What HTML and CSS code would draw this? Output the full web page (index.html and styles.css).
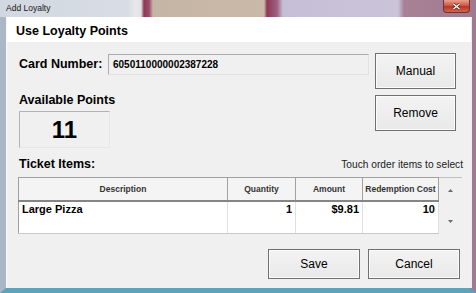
FILE: index.html
```html
<!DOCTYPE html>
<html lang="en">
<head>
  <meta charset="UTF-8">
  <title>Add Loyalty</title>
  <link rel="stylesheet" href="styles.css">
</head>
<body>
  <div class="window">
    <div class="titlebar">
      <span class="title">Add Loyalty</span>
      <span class="close">
        <svg width="9" height="7" viewBox="0 0 9 7">
          <path d="M1.5 1 L7.5 6 M7.5 1 L1.5 6" stroke="#5a1a10" stroke-width="2.6" />
          <path d="M1.5 1 L7.5 6 M7.5 1 L1.5 6" stroke="#fff" stroke-width="1.4" />
        </svg>
      </span>
    </div>
    <div class="frame">
      <div class="client">
        <div class="header">Use Loyalty Points</div>

        <div class="top">
          <div class="top-left">
            <div class="card-row">
              <span class="label card-label">Card Number:</span>
              <div class="card-field">6050110000002387228</div>
            </div>
            <div class="label avail">Available Points</div>
            <div class="points">11</div>
          </div>
          <div class="buttons">
            <button class="btn">Manual</button>
            <button class="btn">Remove</button>
          </div>
        </div>

        <div class="items-head">
          <span class="label">Ticket Items:</span>
          <span class="hint">Touch order items to select</span>
        </div>

        <div class="grid">
          <table class="items">
            <colgroup>
              <col style="width:209px">
              <col style="width:68px">
              <col style="width:67px">
              <col style="width:76px">
            </colgroup>
            <thead>
              <tr>
                <th>Description</th>
                <th>Quantity</th>
                <th>Amount</th>
                <th>Redemption Cost</th>
              </tr>
            </thead>
            <tbody>
              <tr>
                <td>Large Pizza</td>
                <td class="num">1</td>
                <td class="num">$9.81</td>
                <td class="num">10</td>
              </tr>
            </tbody>
          </table>
          <div class="scroll">
            <svg width="5" height="3" viewBox="0 0 5 3"><path d="M0 3 L2.5 0 L5 3 Z" fill="#6a6a6a" /></svg>
            <svg width="5" height="3" viewBox="0 0 5 3"><path d="M0 0 L2.5 3 L5 0 Z" fill="#6a6a6a" /></svg>
          </div>
        </div>

        <div class="actions">
          <button class="btn btn-wide">Save</button>
          <button class="btn btn-wide">Cancel</button>
        </div>
      </div>
    </div>
  </div>
</body>
</html>
```

FILE: styles.css
```css
html, body {
  margin: 0;
  padding: 0;
}
body {
  width: 476px;
  height: 293px;
  overflow: hidden;
  font-family: "Liberation Sans", Arial, sans-serif;
  color: #000;
}
.window {
  display: flex;
  flex-direction: column;
  height: 293px;
}
.titlebar {
  display: flex;
  height: 17px;
  flex: none;
  background: linear-gradient(to right,
    #d2d8e1 0, #d8dde4 128px, #e9e9ec 136px, #e2e0e4 141px,
    #8e3a56 144px, #9a4a66 149px, #c5b5a5 153px, #cab9a8 264px,
    #8e3658 267px, #9d6280 277px, #c6bed6 283px, #cbc4d9 398px,
    #a98196 404px, #a27a8f 476px);
}
.title {
  flex: 1;
  font-size: 8.5px;
  line-height: 17px;
  padding-left: 6px;
  color: #151515;
}
.close {
  width: 25px;
  height: 12px;
  margin-right: 6px;
  border: 1px solid #6a3434;
  border-top: none;
  border-radius: 0 0 4px 4px;
  background: linear-gradient(#e6a08e, #cf5a43 45%, #b93621 55%, #d2664e);
  display: flex;
  align-items: center;
  justify-content: center;
}
.frame {
  flex: 1;
  display: flex;
  border-left: 6px solid #a9b7c6;
  border-right: 6px solid #9e7b91;
  border-bottom: 5px solid #5fa3ba;
}
.client {
  flex: 1;
  display: flex;
  flex-direction: column;
  background: #f0f0f0;
  border-left: 1px solid #fafafa;
  border-right: 1px solid #e8eef4;
}
.header {
  height: 25px;
  box-sizing: border-box;
  background: #fff;
  padding: 7px 0 0 9px;
  font-size: 12.5px;
  font-weight: bold;
  line-height: 15px;
}
.label {
  font-size: 12.5px;
  font-weight: bold;
  line-height: 15px;
}
.top {
  display: flex;
  margin: 11px 15px 0 12px;
}
.top-left {
  flex: 1;
}
.card-row {
  display: flex;
  align-items: center;
  height: 21px;
  margin-top: 1px;
}
.card-label {
  width: 89px;
  flex: none;
}
.card-field {
  flex: 1;
  height: 21px;
  box-sizing: border-box;
  border: 1px solid;
  border-color: #adadad #e2e2e2 #e2e2e2 #adadad;
  padding-left: 4px;
  font-size: 10px;
  font-weight: bold;
  line-height: 19px;
}
.avail {
  margin-top: 18px;
}
.points {
  width: 91px;
  height: 37px;
  margin-top: 3px;
  box-sizing: border-box;
  border: 1px solid;
  border-color: #b4b4b4 #e6e6e6 #e6e6e6 #b4b4b4;
  text-align: center;
  font-size: 24px;
  font-weight: bold;
  line-height: 35px;
}
.buttons {
  width: 81px;
  margin-left: 6px;
  display: flex;
  flex-direction: column;
  gap: 6px;
}
.btn {
  height: 36px;
  box-sizing: border-box;
  border: 1px solid #707070;
  background: linear-gradient(#f3f3f3, #e9e9e9);
  box-shadow: inset 0 0 0 1px #fbfbfb;
  font-family: "Liberation Sans", Arial, sans-serif;
  font-size: 12px;
  color: #000;
  padding: 0;
}
.items-head {
  display: flex;
  justify-content: space-between;
  align-items: baseline;
  margin: 9px 8px 0 12px;
  height: 15px;
}
.hint {
  font-size: 10.2px;
  color: #1a1a1a;
}
.grid {
  display: flex;
  margin: 5px 9px 0 11px;
}
.items {
  width: 420px;
  table-layout: fixed;
  border-collapse: collapse;
  background: #fff;
}
.items th {
  height: 22px;
  padding: 0;
  background: #f4f4f4;
  border: 1px solid #a0a0a0;
  border-bottom: 2px solid #858585;
  font-size: 8.5px;
  font-weight: bold;
  color: #333;
}
.items td {
  height: 32px;
  box-sizing: border-box;
  padding: 1px 3px;
  vertical-align: top;
  border-left: 1px solid #a0a0a0;
  border-right: 1px solid #e0e0e0;
  border-bottom: 1px solid #c8c8c8;
  font-size: 11px;
  font-weight: bold;
  line-height: 13px;
}
.items td.num {
  text-align: right;
}
.scroll {
  width: 23px;
  height: 57px;
  box-sizing: border-box;
  display: flex;
  flex-direction: column;
  justify-content: space-between;
  align-items: center;
  padding: 11px 0 11px;
  background: #f0f0f0;
  border-top: 1px solid #c0c0c0;
}
.actions {
  display: flex;
  justify-content: flex-end;
  gap: 8px;
  margin: 15px 11px 0 0;
}
.btn-wide {
  width: 92px;
  height: 30px;
}
```
